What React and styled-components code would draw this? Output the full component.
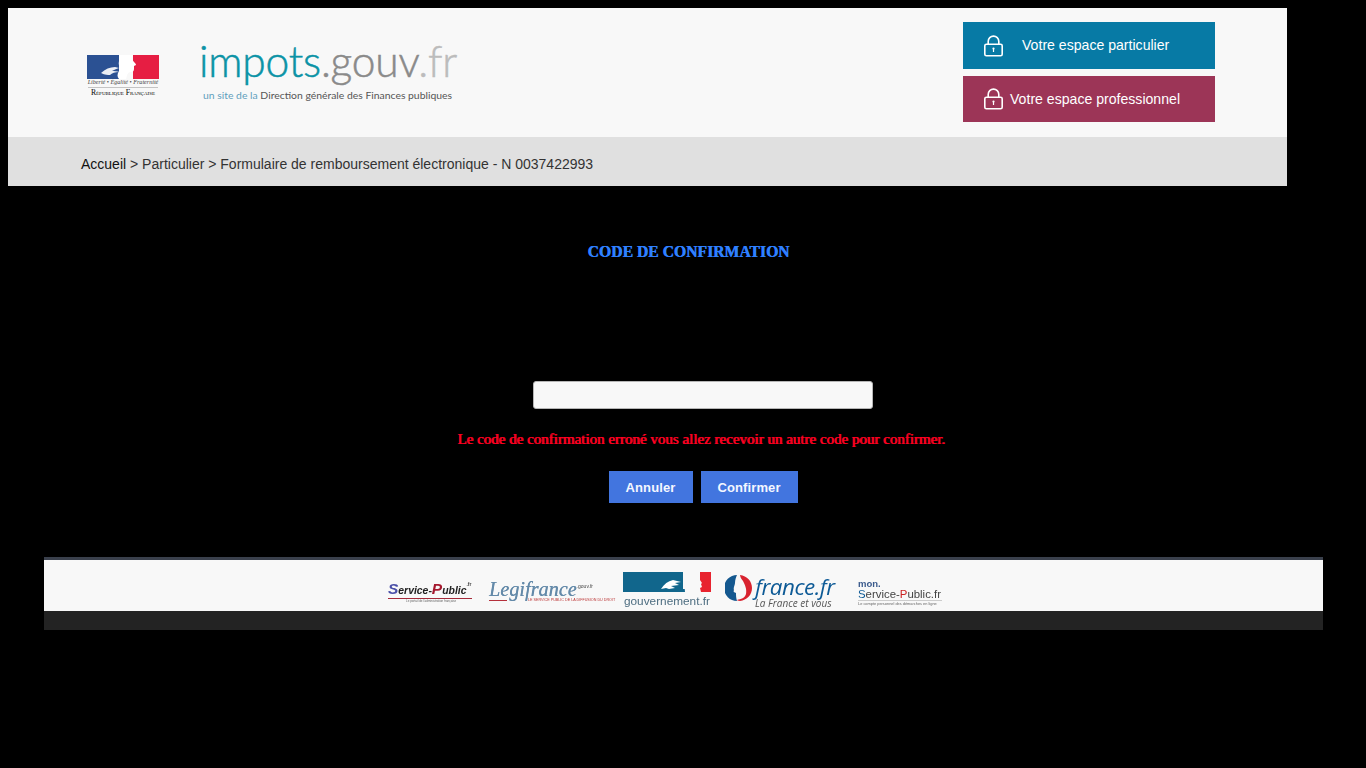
import React from "react";
import styled, { createGlobalStyle } from "styled-components";

const Global = createGlobalStyle`
  html, body {
    margin: 0;
    padding: 0;
    background: #000;
  }
  body {
    padding: 8px 0 0 8px;
    min-height: 760px;
    box-sizing: border-box;
    font-family: "Liberation Sans", Arial, sans-serif;
  }
`;

const Page = styled.div`
  width: 1279px;
`;

const Header = styled.header`
  height: 129px;
  background: #f8f8f8;
  display: flex;
  align-items: stretch;
  padding: 0 72px 0 79px;
  box-sizing: border-box;
`;

const MarianneWrap = styled.div`
  width: 72px;
  margin-top: 47px;
  display: flex;
  flex-direction: column;
  align-items: center;
  flex-shrink: 0;
`;

const Motto = styled.div`
  font-family: "Liberation Serif", serif;
  font-style: italic;
  font-size: 6.1px;
  line-height: 7px;
  padding-bottom: 1px;
  color: #444;
  white-space: nowrap;
  border-bottom: 1px solid #c4c4c4;
`;

const Republic = styled.div`
  font-family: "Liberation Serif", serif;
  font-variant: small-caps;
  font-size: 7.7px;
  line-height: 8px;
  margin-top: 1px;
  color: #000;
  white-space: nowrap;
`;

const ImpotsLogo = styled.div`
  margin: 28px 0 0 40px;
  width: 264px;
  display: flex;
  flex-direction: column;
`;

const Wordmark = styled.div`
  font-family: Lato, sans-serif;
  font-weight: 300;
  font-size: 42.5px;
  line-height: 50px;
  letter-spacing: -0.2px;
  white-space: nowrap;
  -webkit-text-stroke: 0.5px currentColor;
`;

const Mark = styled.span`
  color: ${(p) => p.$color};
`;

const Tagline = styled.div`
  font-family: Lato, sans-serif;
  font-size: 10.4px;
  line-height: 12px;
  margin: 3px 0 0 4px;
  color: #555;
  white-space: nowrap;
`;

const Spaces = styled.div`
  margin: 14px 0 0 auto;
  width: 252px;
  display: flex;
  flex-direction: column;
  gap: 7px;
`;

const SpaceLink = styled.a`
  height: ${(p) => p.$h}px;
  background: ${(p) => p.$bg};
  color: #fff;
  font-size: 14.1px;
  display: flex;
  align-items: center;
  padding-left: 20px;
  gap: ${(p) => p.$gap}px;
  box-sizing: border-box;
`;

const SpaceLabel = styled.span`
  margin-bottom: ${(p) => p.$lift || 0}px;
`;

const Crumbs = styled.nav`
  height: 49px;
  background: #e0e0e0;
  display: flex;
  align-items: center;
  padding: 5px 0 0 73px;
  box-sizing: border-box;
  font-size: 14px;
  color: #333;
`;

const CrumbHome = styled.span`
  color: #111;
`;

const Main = styled.main`
  height: 371px;
  padding-top: 57px;
  box-sizing: border-box;
  display: flex;
  flex-direction: column;
`;

const Title = styled.h2`
  margin: 0;
  width: 1361px;
  text-align: center;
  font-family: "Liberation Serif", serif;
  font-size: 15.7px;
  line-height: 17px;
  font-weight: bold;
  color: #2f80ff;
  text-shadow: 0.5px 0 #2f80ff;
`;

const CodeForm = styled.form`
  margin-top: 121px;
  width: 1390px;
  display: flex;
  flex-direction: column;
  align-items: center;
`;

const CodeInput = styled.input`
  width: 340px;
  height: 28px;
  box-sizing: border-box;
  background: #f8f8f8;
  border: 1px solid #b5b5b5;
  border-radius: 3px;
  padding: 0 8px;
  outline: none;
`;

const ErrorText = styled.p`
  margin: 21px 4px 0 0;
  font-family: "Liberation Serif", serif;
  font-size: 15px;
  line-height: 18px;
  font-weight: normal;
  color: #ff0022;
  text-shadow: 0.9px 0 #ff0022;
  white-space: nowrap;
`;

const Actions = styled.div`
  margin-top: 23px;
  display: flex;
  gap: 8px;
`;

const ActionButton = styled.button`
  height: 32px;
  width: ${(p) => p.$w}px;
  background: #4275df;
  color: #f4f7ff;
  border: 0;
  padding: 0;
  font-family: "Liberation Sans", Arial, sans-serif;
  font-size: 13px;
  font-weight: bold;
  letter-spacing: 0.12px;
`;

const Footer = styled.footer`
  margin-left: 36px;
  width: 1279px;
  border-top: 3px solid #3a404c;
  background: #232323;
  padding-bottom: 19px;
`;

const Partners = styled.div`
  height: 51px;
  background: #f8f8f8;
  display: flex;
  align-items: flex-start;
  padding-left: 344px;
  box-sizing: border-box;
`;

const Partner = styled.div`
  width: ${(p) => p.$w}px;
  margin: ${(p) => p.$mt}px 0 0 ${(p) => p.$ml || 0}px;
  display: flex;
  flex-direction: column;
  flex-shrink: 0;
  white-space: nowrap;
  filter: blur(0.3px);
`;

const SpName = styled.div`
  font-family: "Liberation Sans", sans-serif;
  font-style: italic;
  font-weight: bold;
  font-size: 10.4px;
  line-height: 14px;
  color: #222;
`;

const SpCap = styled.span`
  color: ${(p) => p.$c};
  font-size: 15.5px;
`;

const SpSub = styled.div`
  border-top: 1px solid #a52a3a;
  font-size: 3px;
  line-height: 4px;
  color: #666;
  padding-left: 18px;
`;

const LegiName = styled.div`
  font-family: "Liberation Serif", serif;
  font-style: italic;
  font-size: 20px;
  line-height: 17px;
  color: #648aa9;
  letter-spacing: 0.1px;
  text-shadow: 0.3px 0 #648aa9;
`;

const Small = styled.sup`
  font-family: "Liberation Sans", sans-serif;
  font-style: normal;
  font-size: 5px;
  color: #444;
  letter-spacing: 0;
  vertical-align: 8px;
  line-height: 0;
  text-shadow: none;
`;

const LegiLine = styled.div`
  display: flex;
  align-items: center;
  gap: 21px;
`;

const LegiRule = styled.span`
  width: 18px;
  height: 1.5px;
  background: #b5303c;
  flex-shrink: 0;
`;

const LegiSub = styled.div`
  font-size: 3.7px;
  line-height: 5px;
  color: #b33;
`;

const GouvName = styled.div`
  font-family: "Liberation Sans", sans-serif;
  font-size: 11.8px;
  line-height: 14px;
  margin: 2px 0 0 1px;
  color: #4d6d80;
`;

const FranceText = styled.div`
  display: flex;
  flex-direction: column;
`;

const FranceName = styled.div`
  font-family: "Open Sans", sans-serif;
  font-style: italic;
  font-size: 22.4px;
  line-height: 23px;
  letter-spacing: -0.5px;
  color: #0d5a96;
`;

const FranceSub = styled.div`
  font-family: "Open Sans", sans-serif;
  font-style: italic;
  font-size: 10px;
  line-height: 10px;
  color: #555;
`;

const FranceRow = styled.div`
  display: flex;
  align-items: flex-start;
  gap: 3px;
`;

const MonTop = styled.div`
  font-family: "Liberation Sans", sans-serif;
  font-size: 9.5px;
  font-weight: bold;
  line-height: 9px;
  color: #3a5a8c;
`;

const MonName = styled.div`
  font-family: "Liberation Sans", sans-serif;
  font-size: 11.4px;
  line-height: 12px;
  color: #444;
`;

const MonSub = styled.div`
  font-size: 3.9px;
  line-height: 5px;
  color: #666;
  border-top: 1px solid #ccc;
`;

const LockIcon = () => (
  <svg width="21" height="22" viewBox="0 0 21 22" fill="none" stroke="#fff" strokeWidth="1.6">
    <rect x="1.8" y="9.2" width="17.4" height="11.6" rx="1.6" />
    <path d="M5.2 9V6.4a5.3 5.3 0 0 1 10.6 0V9" />
    <circle cx="10.5" cy="13.6" r="1.1" fill="#fff" stroke="none" />
    <path d="M10.5 14v3" strokeWidth="1.2" />
  </svg>
);

const MarianneFlag = () => (
  <svg width="72" height="24" viewBox="0 0 72 24">
    <rect width="72" height="24" fill="#f8f8f8" />
    <rect width="32" height="24" fill="#2b5193" />
    <rect x="46" width="26" height="24" fill="#e61e43" />
    <path d="M32 0h14c-1 3-1 5 1 7 1 1 2 2 2 3l-2 1v3c0 2-1 3-3 3-2 0-3 1-4 3l-1 4H32c-2-2-2-5 0-8 1-4-1-7 0-10z" fill="#fff" />
    <path d="M14 18c4-4 9-6 14-6l4 1c-3 1-5 2-7 3 2 0 5 0 7 1-4 0-7 1-9 3-2 0-5 0-9-2z" fill="#fff" opacity="0.9" />
  </svg>
);

const GouvBanner = () => (
  <svg width="88" height="20" viewBox="0 0 88 20">
    <rect width="88" height="20" fill="#f8f8f8" />
    <rect width="60" height="20" fill="#11668c" />
    <rect y="17" width="70" height="3" fill="#11668c" />
    <rect x="77" width="11" height="20" fill="#e8232f" />
    <path d="M62 20h16l-1-4 2-1-1-3 1-1-2-3-1-5 1-3H70l-4 5-5 4z" fill="#f8f8f8" />
    <path d="M38 17c3-5 7-8 12-9l8 2-6 1 4 2-8 1 4 2-6 1-3-1z" fill="#fff" />
  </svg>
);

const FranceMark = () => (
  <svg width="27" height="26" viewBox="0 0 27 26">
    <path d="M12 0a13 13 0 0 0 0 26c-1-3-1-6-1-8-2-1-3-1-2-3-1-2 1-5 1-7 0-3 1-6 2-8z" fill="#14588f" />
    <path d="M15 0c7 1 12 6 12 13s-5 12-12 13c-2 0-3-1-3-1 4-1 8-2 9-6 1-5-1-9-3-13-2-2-3-5-3-6z" fill="#d8232f" />
  </svg>
);

export default function App() {
  return (
    <>
      <Global />
      <Page>
        <Header>
          <MarianneWrap>
            <MarianneFlag />
            <Motto>Liberté • Égalité • Fraternité</Motto>
            <Republic>République Française</Republic>
          </MarianneWrap>
          <ImpotsLogo>
            <Wordmark>
              <Mark $color="#0b93a6">impots</Mark>
              <Mark $color="#8a8a8a">.gouv</Mark>
              <Mark $color="#bcbcbc">.fr</Mark>
            </Wordmark>
            <Tagline>
              <Mark $color="#5f9fbd">un site de la </Mark>
              Direction générale des Finances publiques
            </Tagline>
          </ImpotsLogo>
          <Spaces>
            <SpaceLink $h={47} $bg="#077aa5" $gap={18}>
              <LockIcon />
              <SpaceLabel $lift={2}>Votre espace particulier</SpaceLabel>
            </SpaceLink>
            <SpaceLink $h={46} $bg="#9c3557" $gap={6}>
              <LockIcon />
              <SpaceLabel>Votre espace professionnel</SpaceLabel>
            </SpaceLink>
          </Spaces>
        </Header>
        <Crumbs>
          <CrumbHome>Accueil</CrumbHome>&nbsp;&gt; Particulier &gt; Formulaire de remboursement électronique - N 0037422993
        </Crumbs>
        <Main>
          <Title>CODE DE CONFIRMATION</Title>
          <CodeForm>
            <CodeInput type="text" />
            <ErrorText>Le code de confirmation erroné vous allez recevoir un autre code pour confirmer.</ErrorText>
            <Actions>
              <ActionButton type="button" $w={84}>Annuler</ActionButton>
              <ActionButton type="button" $w={97}>Confirmer</ActionButton>
            </Actions>
          </CodeForm>
        </Main>
        <Footer>
          <Partners>
            <Partner $w={84} $mt={22}>
              <SpName>
                <SpCap $c="#4a4fa8">S</SpCap>ervice-<SpCap $c="#a5182e">P</SpCap>ublic<Small>.fr</Small>
              </SpName>
              <SpSub>Le portail de l'administration française</SpSub>
            </Partner>
            <Partner $w={128} $ml={17} $mt={21}>
              <LegiName>
                Legifrance<Small>.gouv.fr</Small>
              </LegiName>
              <LegiLine>
                <LegiRule />
                <LegiSub>LE SERVICE PUBLIC DE LA DIFFUSION DU DROIT</LegiSub>
              </LegiLine>
            </Partner>
            <Partner $w={88} $ml={6} $mt={12}>
              <GouvBanner />
              <GouvName>gouvernement.fr</GouvName>
            </Partner>
            <Partner $w={111} $ml={14} $mt={15}>
              <FranceRow>
                <FranceMark />
                <FranceText>
                  <FranceName>france.fr</FranceName>
                  <FranceSub>La France et vous</FranceSub>
                </FranceText>
              </FranceRow>
            </Partner>
            <Partner $w={84} $ml={22} $mt={19}>
              <MonTop>mon.</MonTop>
              <MonName>
                <Mark $color="#0d5a96">S</Mark>ervice-<Mark $color="#c22">P</Mark>ublic.fr
              </MonName>
              <MonSub>Le compte personnel des démarches en ligne</MonSub>
            </Partner>
          </Partners>
        </Footer>
      </Page>
    </>
  );
}
